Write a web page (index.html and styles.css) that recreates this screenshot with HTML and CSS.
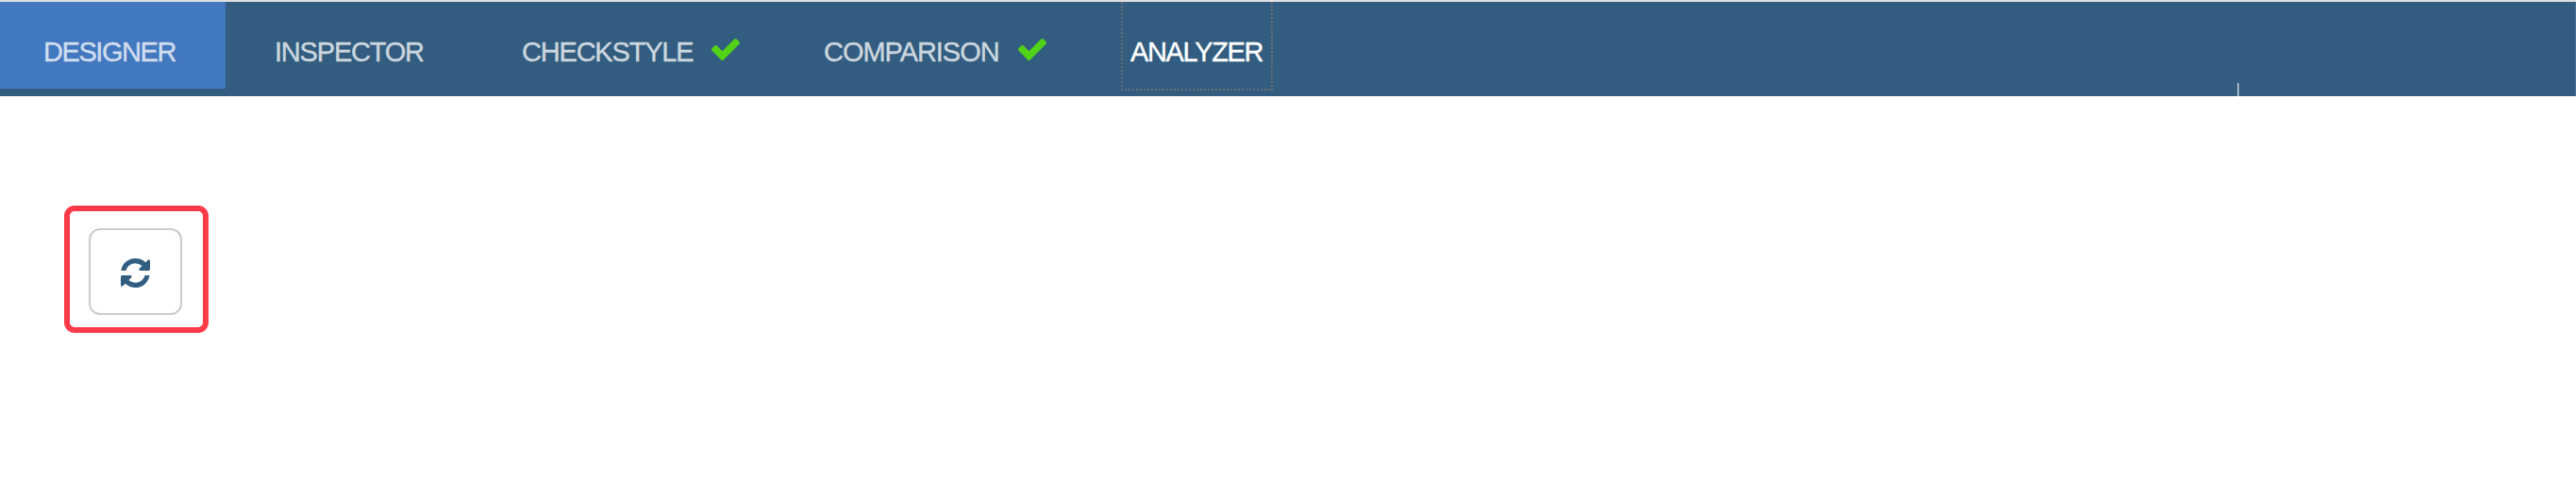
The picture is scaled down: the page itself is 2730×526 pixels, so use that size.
FILE: index.html
```
<!DOCTYPE html>
<html lang="en">
<head>
<meta charset="utf-8">
<title>Analyzer</title>
<link rel="stylesheet" href="styles.css">
</head>
<body>
<svg class="defs" aria-hidden="true">
<symbol id="check" viewBox="121 334 1550 1188"><path d="M1671 566q0 40-28 68l-724 724-136 136q-28 28-68 28t-68-28l-136-136-362-362q-28-28-28-68t28-68l136-136q28-28 68-28t68 28l294 295 656-657q28-28 68-28t68 28l136 136q28 28 28 68z"/></symbol>
</svg>
<nav class="navbar">
<a class="tab tab-designer">DESIGNER</a>
<a class="tab tab-inspector">INSPECTOR</a>
<a class="tab tab-checkstyle">CHECKSTYLE<svg class="check"><use href="#check"/></svg></a>
<a class="tab tab-comparison">COMPARISON<svg class="check"><use href="#check"/></svg></a>
<a class="tab tab-analyzer">ANALYZER</a>
<span class="divider"></span>
</nav>
<main class="content">
<div class="highlight">
<button class="refresh" aria-label="Refresh">
<svg class="refresh-icon" viewBox="128 128 1536 1536"><path d="M1639 1056q0 5-1 7-64 268-268 434.5t-478 166.5q-146 0-282.5-55t-243.5-157l-129 129q-19 19-45 19t-45-19-19-45v-448q0-26 19-45t45-19h448q26 0 45 19t19 45-19 45l-137 137q71 66 161 102t187 36q134 0 250-65t186-179q11-17 53-117 8-23 30-23h192q13 0 22.5 9.5t9.5 22.5zm25-800v448q0 26-19 45t-45 19h-448q-26 0-45-19t-19-45 19-45l138-138q-148-137-349-137-134 0-250 65t-186 179q-11 17-53 117-8 23-30 23h-199q-13 0-22.5-9.5t-9.5-22.5v-7q65-268 270-434.5t480-166.5q146 0 284 55.5t245 156.5l130-129q19-19 45-19t45 19 19 45z"/></svg>
</button>
</div>
</main>
</body>
</html>
```
FILE: styles.css
```
* { box-sizing: border-box; }
body { margin: 0; background: #fff; font-family: "Liberation Sans", Arial, sans-serif; }
.defs { display: none; }
.navbar {
  display: flex;
  height: 102px;
  border-top: 2px solid #dfdfe3;
  background: linear-gradient(#4a7296, #4a7296) right / 1px 100% no-repeat #325d80;
}
.tab {
  display: flex;
  flex: none;
  height: 92px;
  padding-top: 37px;
  font-size: 29px;
  line-height: 33px;
  letter-spacing: -1.2px;
  color: #ccd6df;
  -webkit-text-stroke: 0.4px currentColor;
  white-space: nowrap;
}
.tab-designer { width: 239px; padding-left: 46px; background: #4278be; color: #d0ddef; letter-spacing: -1.45px; }
.tab-inspector { width: 263px; padding-left: 52px; }
.tab-checkstyle { width: 320px; padding-left: 51px; }
.tab-comparison { width: 366px; padding-left: 51px; letter-spacing: -1.05px; }
.tab-analyzer {
  width: 161px;
  height: 94px;
  padding-left: 10px;
  color: #fff;
  letter-spacing: -1.35px;
  background:
    repeating-linear-gradient(#6e6e70 0 2px, transparent 2px 4px) left / 2px 100% no-repeat,
    repeating-linear-gradient(#6e6e70 0 2px, transparent 2px 4px) right / 2px 100% no-repeat,
    repeating-linear-gradient(90deg, #6e6e70 0 2px, transparent 2px 4px) bottom / 100% 2px no-repeat;
}
.check { width: 30px; height: 23px; margin: 2px 0 0 20px; fill: #52d317; }
.divider { width: 2px; height: 14px; margin: auto 357px 0 auto; background: #a1b4c5; }
.content { padding: 116px 0 0 68px; }
.highlight {
  display: flex;
  width: 153px;
  height: 135px;
  padding: 18px 0 0 20px;
  border: 6px solid #ff3a49;
  border-radius: 11px;
}
.refresh {
  display: flex;
  align-items: center;
  justify-content: center;
  width: 99px;
  height: 92px;
  padding: 2px 0 0;
  border: 2px solid #ccc;
  border-radius: 12px;
  background: #fff;
}
.refresh-icon { width: 31px; height: 31px; fill: #325d80; }
```
